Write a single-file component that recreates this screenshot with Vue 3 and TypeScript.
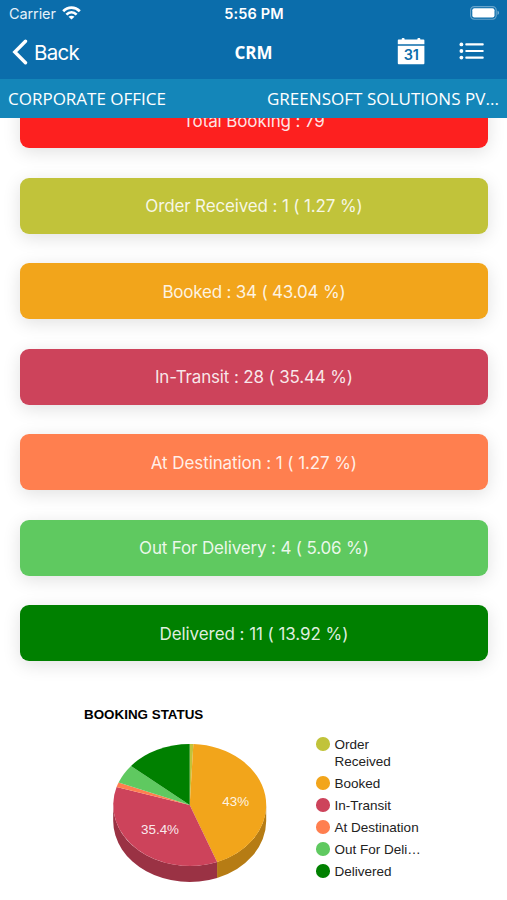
<script setup lang="ts">
interface Status {
  label: string
  legend: string
  count: number
  percent: string
  slice: number
  color: string
  side: string
  spacing: string
}

const statuses: Status[] = [
  { label: 'Order Received', legend: 'Order Received', count: 1, percent: '1.27', slice: 0.6, color: '#c1c33a', side: '#91922c', spacing: '-0.14px' },
  { label: 'Booked', legend: 'Booked', count: 34, percent: '43.04', slice: 34.3, color: '#f2a51b', side: '#b67c14', spacing: '-0.2px' },
  { label: 'In-Transit', legend: 'In-Transit', count: 28, percent: '35.44', slice: 28.1, color: '#cd435b', side: '#9a3244', spacing: '-0.15px' },
  { label: 'At Destination', legend: 'At Destination', count: 1, percent: '1.27', slice: 1, color: '#ff7f4f', side: '#bf5f3b', spacing: '-0.09px' },
  { label: 'Out For Delivery', legend: 'Out For Deli…', count: 4, percent: '5.06', slice: 4, color: '#5fc960', side: '#479748', spacing: '-0.16px' },
  { label: 'Delivered', legend: 'Delivered', count: 11, percent: '13.92', slice: 11, color: '#008000', side: '#006000', spacing: '-0.06px' },
]

const total = statuses.reduce((sum, s) => sum + s.count, 0)

const cx = 105.7
const cy = 65
const rx = 76.5
const ry = 61
const depth = 16

function point(angle: number): [number, number] {
  const rad = (angle * Math.PI) / 180
  return [cx + rx * Math.sin(rad), cy - ry * Math.cos(rad)]
}

let cursor = 0
const slices = statuses.map((s) => {
  const start = cursor
  const end = start + (s.slice / total) * 360
  cursor = end
  const [x1, y1] = point(start)
  const [x2, y2] = point(end)
  const large = end - start > 180 ? 1 : 0
  const face = `M${cx} ${cy}L${x1} ${y1}A${rx} ${ry} 0 ${large} 1 ${x2} ${y2}Z`
  // Only the front half of the rim (90° to 270°) is visible.
  const from = Math.max(start, 90)
  const to = Math.min(end, 270)
  let rim = ''
  if (to > from) {
    const [a, b] = point(from)
    const [c, d] = point(to)
    rim = `M${a} ${b}A${rx} ${ry} 0 0 1 ${c} ${d}V${d + depth}A${rx} ${ry} 0 0 0 ${a} ${b + depth}Z`
  }
  return { face, rim, color: s.color, side: s.side }
})
</script>

<template>
  <div class="screen">
    <header class="top">
      <div class="status-bar">
        <div class="carrier">
          <span>Carrier</span>
          <svg class="wifi" width="19" height="14" viewBox="0 0 19 14" fill="none" stroke="#fff" stroke-width="2.7">
            <path d="M1.2 5.2C6 .3 13 .3 17.8 5.2" />
            <path d="M4.4 8.6c3-2.9 7.2-2.9 10.2 0" />
            <path d="M9.5 13.6 6.5 10.8c1.7-1.5 4.3-1.5 6 0z" fill="#fff" stroke="none" />
          </svg>
        </div>
        <span class="clock">5:56 PM</span>
        <svg class="battery" width="30" height="14" viewBox="0 0 30 14">
          <rect x=".6" y=".6" width="25.6" height="12.6" rx="3.6" fill="none" stroke="#fff" stroke-opacity=".38" stroke-width="1.1" />
          <rect x="2.3" y="2.3" width="22.2" height="9.2" rx="2" fill="#fff" />
          <path d="M27.5 4.8c2 .7 2 3.5 0 4.2z" fill="#fff" fill-opacity=".45" />
        </svg>
      </div>
      <nav class="nav">
        <div class="back">
          <svg width="16" height="26" viewBox="0 0 16 26" fill="none" stroke="#fff" stroke-width="3.4" stroke-linecap="round" stroke-linejoin="miter">
            <path d="M13.5 2.2 2.8 13l10.7 10.8" />
          </svg>
          <span>Back</span>
        </div>
        <h1>CRM</h1>
        <div class="actions">
          <div class="calendar">
            <svg width="28" height="27" viewBox="0 0 28 27" fill="#fff">
              <path d="M1.5 1.6h3.2V1a1 1 0 0 1 1-1h.9a1 1 0 0 1 1 1v.6h12.8V1a1 1 0 0 1 1-1h.9a1 1 0 0 1 1 1v.6h3.2q.9 0 .9.9V6.2H.8V2.5q0-.9.7-.9Z" />
              <path d="M.8 7.8h26.6v17.5q0 .9-.9.9H1.7q-.9 0-.9-.9Z" />
              <text x="14.2" y="22" text-anchor="middle" class="day">31</text>
            </svg>
          </div>
          <svg class="list" width="26" height="19" viewBox="0 0 26 19" fill="#fff">
            <circle cx="2.4" cy="2.4" r="1.9" /><circle cx="2.4" cy="9" r="1.9" /><circle cx="2.4" cy="15.6" r="1.9" />
            <rect x="6.3" y="1.3" width="18.4" height="2.2" rx=".8" /><rect x="6.3" y="7.9" width="18.4" height="2.2" rx=".8" /><rect x="6.3" y="14.5" width="18.4" height="2.2" rx=".8" />
          </svg>
        </div>
      </nav>
      <div class="office">
        <span class="branch">CORPORATE OFFICE</span>
        <span class="company">GREENSOFT SOLUTIONS PV...</span>
      </div>
    </header>

    <main class="content">
      <div class="cards">
        <div class="card total"><span>Total Booking : {{ total }}</span></div>
        <div v-for="s in statuses" :key="s.label" class="card" :style="{ background: s.color, letterSpacing: s.spacing }">
          <span>{{ s.label }} : {{ s.count }} ( {{ s.percent }} %)</span>
        </div>
      </div>

      <section class="chart">
        <h2>BOOKING STATUS</h2>
        <div class="chart-body">
          <svg class="pie" width="200" height="150" viewBox="0 0 200 150">
            <template v-for="(s, i) in slices" :key="i">
              <path v-if="s.rim" :d="s.rim" :fill="s.side" />
            </template>
            <path v-for="(s, i) in slices" :key="'f' + i" :d="s.face" :fill="s.color" />
            <text x="151.7" y="65.5" text-anchor="middle">43%</text>
            <text x="76" y="94" text-anchor="middle">35.4%</text>
          </svg>
          <ul class="legend">
            <li v-for="s in statuses" :key="s.label">
              <i :style="{ background: s.color }"></i>
              <span>{{ s.legend }}</span>
            </li>
          </ul>
        </div>
      </section>
    </main>
  </div>
</template>

<style>
body {
  margin: 0;
  background: #fff;
}
</style>

<style scoped>
.screen {
  display: flex;
  flex-direction: column;
  width: 507px;
  height: 900px;
  overflow: hidden;
  background: #fff;
  font-family: Inter, "Liberation Sans", sans-serif;
}
.top {
  flex: none;
  color: #fff;
  background: #0b6dab;
}
.status-bar {
  display: grid;
  grid-template-columns: 1fr auto 1fr;
  align-items: center;
  height: 27px;
  padding: 0 6px 0 9px;
  box-sizing: border-box;
  font-size: 14.5px;
}
.carrier {
  display: flex;
  align-items: center;
  gap: 6px;
  color: #e5f1f9;
  letter-spacing: -0.1px;
}
.wifi {
  margin-top: -2px;
}
.clock {
  margin-right: 2px;
  font-weight: 600;
  font-size: 14.5px;
  letter-spacing: 0.15px;
}
.battery {
  justify-self: end;
  margin: -1px 1px 0 0;
}
.nav {
  display: grid;
  grid-template-columns: 1fr auto 1fr;
  align-items: center;
  height: 52px;
  padding: 0 22px 2px 12px;
  box-sizing: border-box;
}
.back {
  display: flex;
  align-items: center;
  gap: 6px;
  font-size: 20.5px;
  letter-spacing: -0.75px;
}
h1 {
  margin: 0 0 0 10px;
  font: 700 17px "Open Sans", sans-serif;
}
.actions {
  display: flex;
  justify-content: flex-end;
  align-items: center;
  gap: 34px;
}
.calendar {
  display: flex;
  margin-top: -1px;
}
.list {
  margin-top: -2px;
}
.day {
  fill: #0b6dab;
  font: 600 14.5px Inter, sans-serif;
  letter-spacing: -0.3px;
}
.office {
  display: flex;
  justify-content: space-between;
  align-items: center;
  height: 39px;
  padding: 0 8px 0 8px;
  background: #1486b9;
  font: 17px "Open Sans", sans-serif;
  white-space: nowrap;
}
.company {
  letter-spacing: 0.04px;
}
.content {
  flex: 1;
  min-height: 0;
  overflow: hidden;
}
.cards {
  display: flex;
  flex-direction: column;
  gap: 29.3px;
  margin-top: -25.8px;
  padding: 0 19.5px 0 20.3px;
}
.card {
  display: flex;
  align-items: center;
  justify-content: center;
  height: 56.2px;
  padding-top: 1px;
  box-sizing: border-box;
  border-radius: 9px;
  box-shadow: 0 4px 18px rgba(0, 0, 0, 0.12);
  color: rgba(255, 255, 255, 0.88);
  font-size: 17px;
  white-space: nowrap;
}
.total {
  background: #fd201f;
  letter-spacing: -0.12px;
}
.chart {
  padding: 46px 0 0 84px;
  font-family: "Liberation Sans", Arial, sans-serif;
}
h2 {
  margin: 0;
  font-size: 13.4px;
  line-height: 15px;
  color: #000;
}
.chart-body {
  display: flex;
  margin-top: 18px;
}
.pie text {
  fill: rgba(255, 255, 255, 0.9);
  font-size: 13.4px;
}
.legend {
  display: flex;
  flex-direction: column;
  gap: 5px;
  margin: -4px 0 0 32px;
  padding: 0;
  width: 112px;
  list-style: none;
  font-size: 13.5px;
  line-height: 17px;
  color: #222;
}
.legend li {
  display: flex;
  gap: 5px;
}
.legend i {
  flex: none;
  width: 13.6px;
  height: 13.6px;
  margin-top: 1px;
  border-radius: 50%;
}
.legend span {
  white-space: nowrap;
}
.legend li:first-child span {
  width: 60px;
  white-space: normal;
}
</style>
